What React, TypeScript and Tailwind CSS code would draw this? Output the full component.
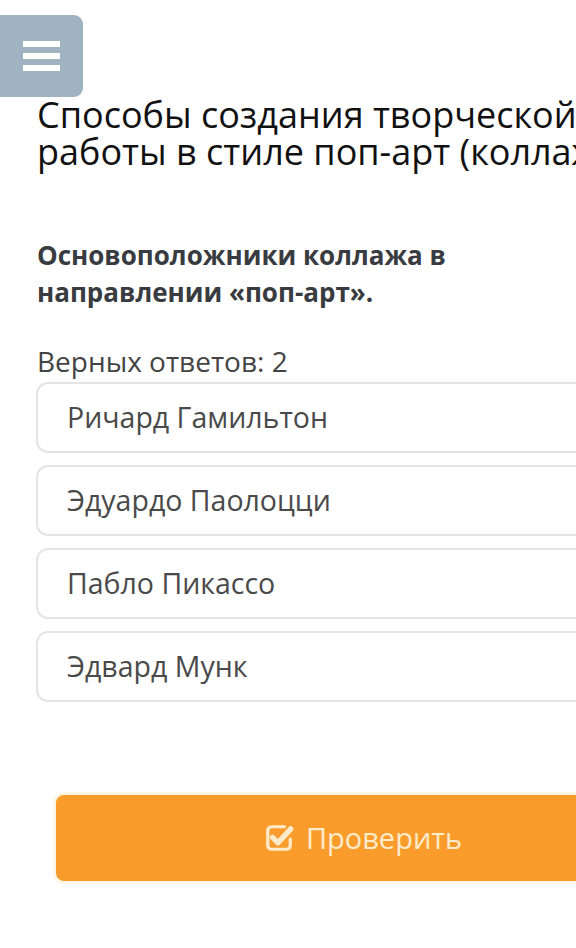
import React from 'react';

const answers = ['Ричард Гамильтон', 'Эдуардо Паолоцци', 'Пабло Пикассо', 'Эдвард Мунк'];

function CheckSquareIcon() {
  return (
    <svg width="30" height="30" viewBox="0 0 28 28" fill="none" className="shrink-0">
      <path
        d="M19 3.5H7A3.5 3.5 0 0 0 3.5 7v14A3.5 3.5 0 0 0 7 24.5h14a3.5 3.5 0 0 0 3.5-3.5v-6"
        stroke="currentColor"
        strokeWidth="3"
        strokeLinecap="round"
      />
      <path d="M8 13.5l5 5L25 5.5" stroke="currentColor" strokeWidth="5" strokeLinecap="round" strokeLinejoin="round" />
    </svg>
  );
}

export default function App() {
  return (
    <div className="w-[576px] h-[948px] overflow-hidden bg-white font-['Open_Sans',sans-serif]">
      <div className="w-[700px]">
        <button className="mt-[15px] w-[83px] h-[82px] rounded-r-[9px] bg-[#a0b3c1] flex flex-col items-center justify-center gap-[6px]">
          <span className="block w-[37px] h-[6px] bg-white" />
          <span className="block w-[37px] h-[6px] bg-white" />
          <span className="block w-[37px] h-[6px] bg-white" />
        </button>

        <h1 className="-mt-[1px] pl-[37px] text-[36px] leading-[37px] text-[#111] whitespace-nowrap">
          Способы создания творческой
          <br />
          работы в стиле поп-арт (коллаж)
        </h1>

        <div className="mt-[67px] pl-[37px] pr-[230px] text-[26px] leading-[37px] font-bold text-[#383b40]">
          Основоположники коллажа в
          <br />
          направлении «поп-арт».
        </div>

        <div className="mt-[32px] pl-[37px] text-[28px] leading-[37px] text-[#444]">Верных ответов: 2</div>

        <div className="mt-[2px] pl-[36px] flex flex-col gap-[12px]">
          {answers.map(a => (
            <div
              key={a}
              className="h-[71px] w-[640px] border-2 border-[#e4e4e4] rounded-[12px] flex items-center pl-[29px] text-[28.5px] text-[#4a4a4a]"
            >
              {a}
            </div>
          ))}
        </div>

        <div className="mt-[93px] pl-[56px]">
          <button className="w-[614px] h-[86px] rounded-[8px] bg-[#fa9c2b] shadow-[0_0_0_3px_#fff6e8] flex items-center justify-center gap-[12px] text-[#fdebcc] text-[29px]">
            <CheckSquareIcon />
            Проверить
          </button>
        </div>
      </div>
    </div>
  );
}
